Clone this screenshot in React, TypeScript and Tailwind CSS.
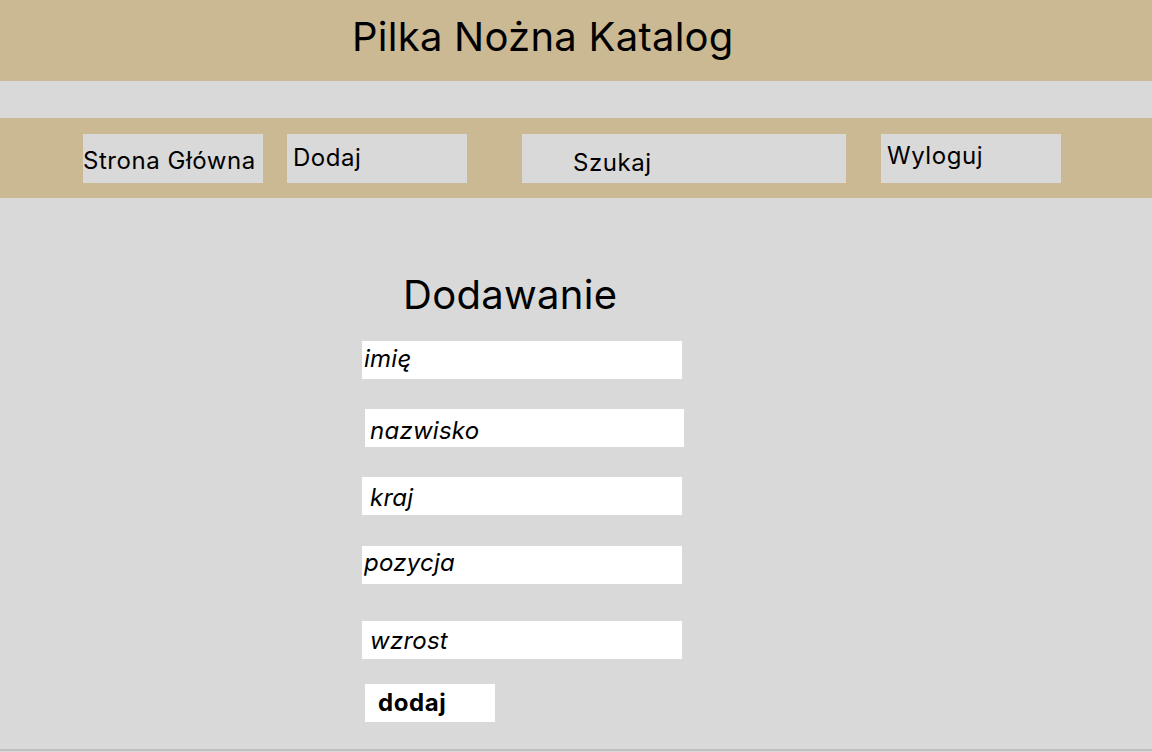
import React from "react";

const navItems = [
  { label: "Strona Główna", box: "w-[180px] pt-[12px] pl-0" },
  { label: "Dodaj", box: "w-[180px] pt-[9px] pl-[6px] ml-[24px]" },
  { label: "Szukaj", box: "w-[324px] pt-[14px] pl-[51px] ml-[55px]" },
  { label: "Wyloguj", box: "w-[180px] pt-[7px] pl-[6px] ml-[35px]" },
];

const fields = [
  { label: "imię", box: "mt-[22px] ml-0 w-[320px]", text: "pt-[3px] pl-[2px]" },
  { label: "nazwisko", box: "mt-[30px] ml-[3px] w-[319px]", text: "pt-[7px] pl-[5px]" },
  { label: "kraj", box: "mt-[30px] ml-0 w-[320px]", text: "pt-[6px] pl-[8px]" },
  { label: "pozycja", box: "mt-[31px] ml-0 w-[320px]", text: "pt-[2px] pl-[2px]" },
  { label: "wzrost", box: "mt-[37px] ml-0 w-[320px]", text: "pt-[5px] pl-[8px]" },
];

export default function App() {
  return (
    <div className="min-h-[752px] w-full bg-[#d9d9d9] font-[Inter,sans-serif] text-black">
      {/* Header */}
      <header className="h-[81px] bg-[#cbb993] pl-[352px] pt-[13px]">
        <h1 className="text-[40px] leading-[48px] font-normal tracking-[0.25px]">Pilka Nożna Katalog</h1>
      </header>

      <div className="h-[37px]" />

      {/* Nav */}
      <nav className="h-[80px] bg-[#cbb993] pl-[83px] pt-[16px] flex items-start">
        {navItems.map((item) => (
          <div
            key={item.label}
            className={`h-[49px] bg-[#d9d9d9] text-[24px] leading-[29px] tracking-[0.55px] whitespace-nowrap ${item.box}`}
          >
            {item.label}
          </div>
        ))}
      </nav>

      {/* Form */}
      <main className="flex flex-col items-start pl-[362px]">
        <h2 className="mt-[73px] ml-[41px] text-[40px] leading-[48px] font-normal tracking-[0.3px]">
          Dodawanie
        </h2>

        {fields.map((f) => (
          <div key={f.label} className={`h-[38px] bg-white ${f.box}`}>
            <div className={`text-[24px] leading-[29px] italic tracking-[0.25px] ${f.text}`}>{f.label}</div>
          </div>
        ))}

        <button className="mt-[25px] ml-[3px] h-[38px] w-[130px] bg-white text-left pl-[13px] pt-[4px] self-start">
          <div className="h-full text-[24px] leading-[29px] font-bold tracking-[0.6px]">dodaj</div>
        </button>
      </main>

      <div className="mt-[27px] h-[2px] bg-[#bfbfbf]" />
    </div>
  );
}
